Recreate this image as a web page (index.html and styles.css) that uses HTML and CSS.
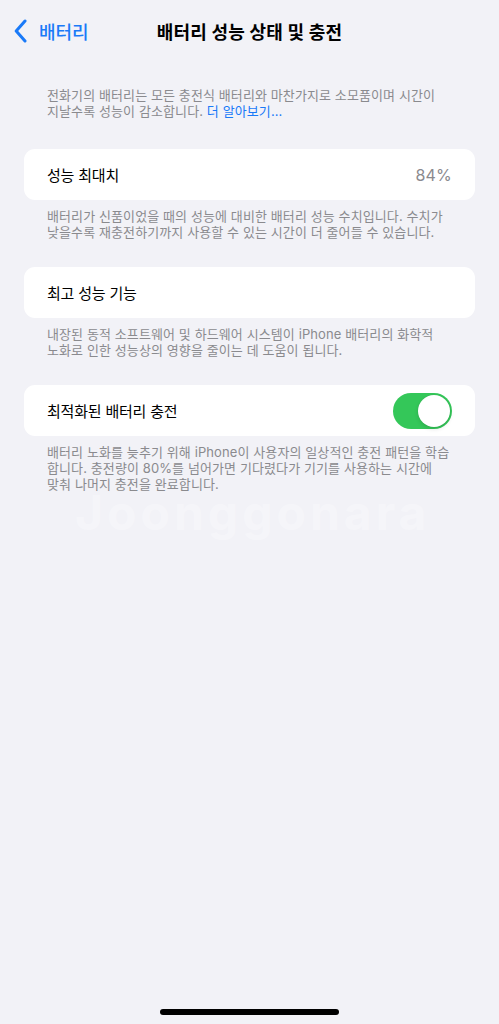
FILE: index.html
```html
<!DOCTYPE html>
<html lang="ko">
<head>
<meta charset="utf-8">
<title>배터리 성능 상태 및 충전</title>
<link rel="stylesheet" href="styles.css">
</head>
<body>
<div class="screen">
  <header class="nav">
    <a class="nav-back" href="#">
      <svg class="chevron" width="13" height="24" viewBox="0 0 13 24" aria-hidden="true">
        <path d="M11 2 L2.2 12 L11 22" fill="none" stroke="currentColor" stroke-width="3" stroke-linecap="round" stroke-linejoin="round"/>
      </svg>
      <span class="nav-back-label">배터리</span>
    </a>
    <h1 class="nav-title">배터리 성능 상태 및 충전</h1>
    <span class="nav-spacer"></span>
  </header>

  <main class="content">
    <p class="intro">전화기의 배터리는 모든 충전식 배터리와 마찬가지로 소모품이며 시간이<br>지날수록 성능이 감소합니다. <a class="link" href="#">더 알아보기...</a></p>

    <section class="group">
      <div class="cell">
        <span class="cell-label">성능 최대치</span>
        <span class="cell-value">84%</span>
      </div>
      <p class="footnote">배터리가 신품이었을 때의 성능에 대비한 배터리 성능 수치입니다. 수치가<br>낮을수록 재충전하기까지 사용할 수 있는 시간이 더 줄어들 수 있습니다.</p>
    </section>

    <section class="group">
      <div class="cell">
        <span class="cell-label">최고 성능 기능</span>
      </div>
      <p class="footnote">내장된 동적 소프트웨어 및 하드웨어 시스템이 iPhone 배터리의 화학적<br>노화로 인한 성능상의 영향을 줄이는 데 도움이 됩니다.</p>
    </section>

    <section class="group">
      <div class="cell">
        <span class="cell-label">최적화된 배터리 충전</span>
        <span class="switch is-on" role="switch" aria-checked="true"><span class="switch-knob"></span></span>
      </div>
      <p class="footnote">배터리 노화를 늦추기 위해 iPhone이 사용자의 일상적인 충전 패턴을 학습<br>합니다. 충전량이 80%를 넘어가면 기다렸다가 기기를 사용하는 시간에<br>맞춰 나머지 충전을 완료합니다.</p>
    </section>
  </main>

  <div class="watermark">Joonggonara</div>
  <div class="home-indicator"></div>
</div>
</body>
</html>
```

FILE: styles.css
```css
* {
  box-sizing: border-box;
}

html, body {
  margin: 0;
  padding: 0;
}

body {
  background: #f2f2f7;
  font-family: "Inter", "Noto Sans CJK KR", sans-serif;
  color: #000;
}

.screen {
  position: relative;
  width: 499px;
  height: 1024px;
  overflow: hidden;
}

/* Navigation bar */
.nav {
  height: 61px;
  display: grid;
  grid-template-columns: 1fr auto 1fr;
  align-items: center;
}

.nav-back {
  display: flex;
  align-items: center;
  gap: 12px;
  padding-left: 14px;
  color: #1a7af8;
  text-decoration: none;
}

.chevron {
  display: block;
}

.nav-back-label {
  font-size: 18px;
  letter-spacing: 0;
  font-weight: 500;
}

.nav-title {
  margin: 0;
  font-size: 18px;
  font-weight: 700;
  letter-spacing: 0.2px;
}

/* Content */
.content {
  padding: 26px 24px 0;
}

.intro,
.footnote {
  margin: 0;
  padding: 0 23px;
  font-size: 13px;
  line-height: 16px;
  letter-spacing: 0.1px;
  color: #8a8a8e;
}

.link {
  color: #1a7af8;
  text-decoration: none;
}

.group {
  margin-top: 30px;
}

.group + .group {
  margin-top: 27px;
}

.cell {
  height: 51px;
  background: #fff;
  border-radius: 11px;
  padding: 0 23px;
  display: flex;
  align-items: center;
  justify-content: space-between;
}

.cell-label {
  font-size: 15px;
  letter-spacing: -0.2px;
}

.cell-value {
  font-size: 16px;
  color: #8a8a8e;
  letter-spacing: 0.2px;
}

.footnote {
  padding-top: 8px;
}

/* Toggle switch */
.switch {
  width: 59px;
  height: 36px;
  border-radius: 18px;
  background: #e9e9eb;
  padding: 2px;
  display: flex;
}

.switch.is-on {
  background: #34c759;
  justify-content: flex-end;
}

.switch-knob {
  width: 32px;
  height: 32px;
  border-radius: 50%;
  background: #fff;
  box-shadow: 0 2px 4px rgba(0, 0, 0, 0.12), 0 0 1px rgba(0, 0, 0, 0.1);
}

/* Overlays */
.watermark {
  position: absolute;
  left: 75px;
  top: 495px;
  font-family: "Inter", sans-serif;
  font-size: 48px;
  line-height: 36px;
  font-weight: 700;
  letter-spacing: 4px;
  color: rgba(255, 255, 255, 0.3);
  pointer-events: none;
}

.home-indicator {
  position: absolute;
  left: 160px;
  bottom: 9px;
  width: 179px;
  height: 6px;
  border-radius: 3px;
  background: #000;
}
```
